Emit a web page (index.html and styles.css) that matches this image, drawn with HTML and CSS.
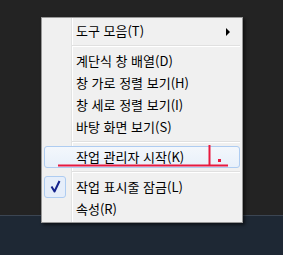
FILE: index.html
```html
<!DOCTYPE html>
<html lang="ko">
<head>
    <meta charset="UTF-8">
    <title>작업 표시줄 메뉴</title>
    <link rel="stylesheet" href="styles.css">
</head>
<body>
    <div class="desktop">
        <div class="workspace"></div>
        <div class="taskbar"></div>

        <ul class="context-menu">
            <li class="item has-sub">도구 모음(T)<span class="sub-arrow"></span></li>
            <li class="separator"></li>
            <li class="item">계단식 창 배열(D)</li>
            <li class="item">창 가로 정렬 보기(H)</li>
            <li class="item">창 세로 정렬 보기(I)</li>
            <li class="item">바탕 화면 보기(S)</li>
            <li class="separator"></li>
            <li class="item hover">작업 관리자 시작(K)</li>
            <li class="separator"></li>
            <li class="item checked">
                <span class="check-box">
                    <svg width="20" height="20" viewBox="0 0 20 20">
                        <path d="M6.5 9.5 L9.5 14.5 L14.5 4" stroke="#14228c" stroke-width="2" fill="none" stroke-linejoin="round"/>
                    </svg>
                </span>작업 표시줄 잠금(L)
            </li>
            <li class="item">속성(R)</li>
        </ul>

        <!-- red pen marks drawn over the screenshot -->
        <svg class="pen-marks" width="283" height="255" viewBox="0 0 283 255">
            <path d="M58 165.5 H228" stroke="#e8193f" stroke-width="2" fill="none"/>
            <path d="M209.5 145 V166" stroke="#e8193f" stroke-width="2" fill="none"/>
            <rect x="218" y="159" width="3" height="3" fill="#e8193f"/>
        </svg>
    </div>
</body>
</html>
```

FILE: styles.css
```css
/* General */
body {
    margin: 0;
    padding: 0;
    background-color: #222222;
    font-family: "Noto Sans CJK KR", "Malgun Gothic", sans-serif;
    font-size: 13px;
    color: #000000;
}

.desktop {
    position: relative;
    width: 283px;
    height: 255px;
    display: flex;
    flex-direction: column;
    overflow: hidden;
}

.workspace {
    height: 215px;
    background-color: #232323;
}

.taskbar {
    flex: 1;
    background-color: #1e2834;
    border-top: 1px solid #3b4552;
}

/* Context menu */
.context-menu {
    position: absolute;
    left: 41px;
    top: 17px;
    width: 202px;
    box-sizing: border-box;
    margin: 0;
    padding: 2px;
    list-style: none;
    border: 1px solid #979797;
    background-color: #f0f0f0;
    /* gutter line next to the icon column */
    background-image: linear-gradient(to right,
        transparent 29px, #e2e3e3 29px, #e2e3e3 30px, #ffffff 30px, #ffffff 31px, transparent 31px);
    box-shadow: 2px 2px 3px rgba(0, 0, 0, 0.55);
}

.item {
    position: relative;
    height: 22px;
    line-height: 22px;
    padding-left: 32px;
    white-space: nowrap;
}

.item.hover {
    box-sizing: border-box;
    line-height: 20px;
    border: 1px solid #aeccf1;
    border-radius: 3px;
    padding-left: 31px;
    background: linear-gradient(to bottom, #f3f7fc, #e8f0fa);
}

.separator {
    height: 8px;
    margin-left: 28px;
    background: linear-gradient(to bottom,
        transparent 3px, #e0e0e0 3px, #e0e0e0 4px, #ffffff 4px, #ffffff 5px, transparent 5px);
}

.sub-arrow {
    position: absolute;
    right: 10px;
    top: 8px;
    width: 0;
    height: 0;
    border-top: 4px solid transparent;
    border-bottom: 4px solid transparent;
    border-left: 4px solid #000000;
}

.check-box {
    position: absolute;
    left: 0;
    top: 0;
    width: 22px;
    height: 22px;
    box-sizing: border-box;
    border: 1px solid #aeccf1;
    border-radius: 3px;
    background-color: #e6eefa;
}

.check-box svg {
    display: block;
}

/* Red pen marks */
.pen-marks {
    position: absolute;
    left: 0;
    top: 0;
}
```
